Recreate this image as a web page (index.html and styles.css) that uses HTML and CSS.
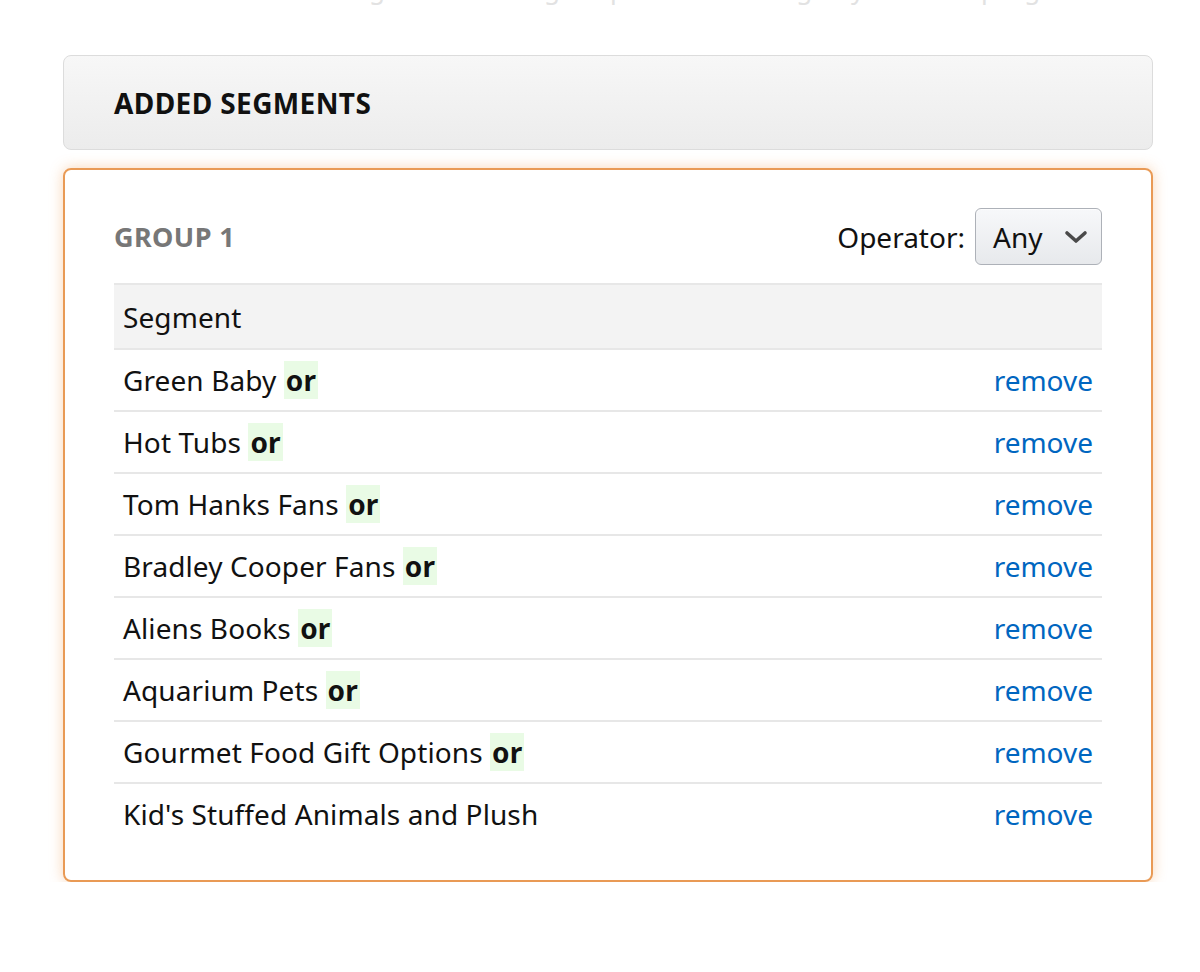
FILE: index.html
```html
<!DOCTYPE html>
<html lang="en">

<head>
    <meta http-equiv="Content-Type" content="text/html; charset=UTF-8">
    <meta name="viewport" content="width=device-width, initial-scale=1.0">
    <title>Added segments</title>
    <link rel="stylesheet" href="styles.css">
</head>

<body>
    <div class="cut-line"><span>Choose audience segments and group them to target your campaign.</span></div>

    <div class="panel-head">
        <h2>ADDED SEGMENTS</h2>
    </div>

    <div class="group-box">
        <div class="group-top">
            <h3>GROUP 1</h3>
            <label class="operator">
                Operator:
                <span class="select">Any
                    <svg width="26" height="16" viewBox="0 0 26 16">
                        <path d="M4 4 L13 12 L22 4" fill="none" stroke="#4a4a4a" stroke-width="3.6" stroke-linecap="round" stroke-linejoin="round"/>
                    </svg>
                </span>
            </label>
        </div>
        <table class="seg-table">
            <thead>
                <tr>
                    <th colspan="2">Segment</th>
                </tr>
            </thead>
            <tbody>
                <tr>
                    <td>Green Baby <b class="op">or</b></td>
                    <td class="act"><a href="#">remove</a></td>
                </tr>
                <tr>
                    <td>Hot Tubs <b class="op">or</b></td>
                    <td class="act"><a href="#">remove</a></td>
                </tr>
                <tr>
                    <td>Tom Hanks Fans <b class="op">or</b></td>
                    <td class="act"><a href="#">remove</a></td>
                </tr>
                <tr>
                    <td>Bradley Cooper Fans <b class="op">or</b></td>
                    <td class="act"><a href="#">remove</a></td>
                </tr>
                <tr>
                    <td>Aliens Books <b class="op">or</b></td>
                    <td class="act"><a href="#">remove</a></td>
                </tr>
                <tr>
                    <td>Aquarium Pets <b class="op">or</b></td>
                    <td class="act"><a href="#">remove</a></td>
                </tr>
                <tr>
                    <td>Gourmet Food Gift Options <b class="op">or</b></td>
                    <td class="act"><a href="#">remove</a></td>
                </tr>
                <tr>
                    <td>Kid's Stuffed Animals and Plush</td>
                    <td class="act"><a href="#">remove</a></td>
                </tr>
            </tbody>
        </table>
    </div>
</body>

</html>
```

FILE: styles.css
```css
body {
    margin: 0;
    background: #fff;
    font-family: "Noto Sans", "Open Sans", Arial, sans-serif;
    color: #111;
}

/* bottom of a line of text scrolled out above */
.cut-line {
    height: 8px;
    overflow: hidden;
    padding-left: 90px;
    white-space: nowrap;
}

.cut-line span {
    display: block;
    margin-top: -27px;
    line-height: 32px;
    font-size: 26px;
    color: #e2e2e2;
    letter-spacing: 2px;
}

.panel-head {
    margin: 47px 0 0 63px;
    width: 1090px;
    height: 95px;
    box-sizing: border-box;
    border: 1px solid #dcdcdc;
    border-radius: 8px;
    background: linear-gradient(#f7f7f7, #ececec);
    display: flex;
    align-items: center;
    padding-left: 50px;
}

.panel-head h2 {
    margin: 0;
    font-size: 28px;
    font-weight: 700;
    letter-spacing: .4px;
    color: #111;
}

.group-box {
    margin: 18px 0 0 63px;
    width: 1090px;
    box-sizing: border-box;
    border: 2px solid #e99a55;
    border-radius: 8px;
    box-shadow: 0 0 14px rgba(240, 150, 70, 0.4);
    padding: 38px 49px 36px 49px;
}

.group-top {
    display: flex;
    justify-content: space-between;
    align-items: center;
    height: 57px;
}

.group-top h3 {
    margin: 0;
    font-size: 27px;
    font-weight: 700;
    letter-spacing: .4px;
    color: #777;
}

.operator {
    display: flex;
    align-items: center;
    gap: 10px;
    font-size: 28px;
    color: #111;
}

.select {
    display: flex;
    align-items: center;
    justify-content: space-between;
    width: 127px;
    height: 57px;
    box-sizing: border-box;
    padding: 0 12px 0 17px;
    border: 1px solid #adb1b8;
    border-radius: 6px;
    background: linear-gradient(#f7f8fa, #e7e9ec);
    box-shadow: 0 1px 0 rgba(255, 255, 255, .6) inset;
}

.seg-table {
    width: 100%;
    margin-top: 18px;
    border-collapse: collapse;
    font-size: 28px;
    letter-spacing: .1px;
}

.seg-table th {
    text-align: left;
    font-weight: 400;
    background: #f3f3f3;
    border-top: 2px solid #e7e7e7;
    height: 63px;
    padding: 0 9px;
}

.seg-table td {
    height: 60px;
    padding: 0 9px;
    border-top: 2px solid #e7e7e7;
}

.seg-table .act {
    text-align: right;
}

.seg-table a {
    color: #0066c0;
    letter-spacing: 0;
    text-decoration: none;
}

.op {
    background: #e9fbe5;
    padding: 0 2px;
}
```
